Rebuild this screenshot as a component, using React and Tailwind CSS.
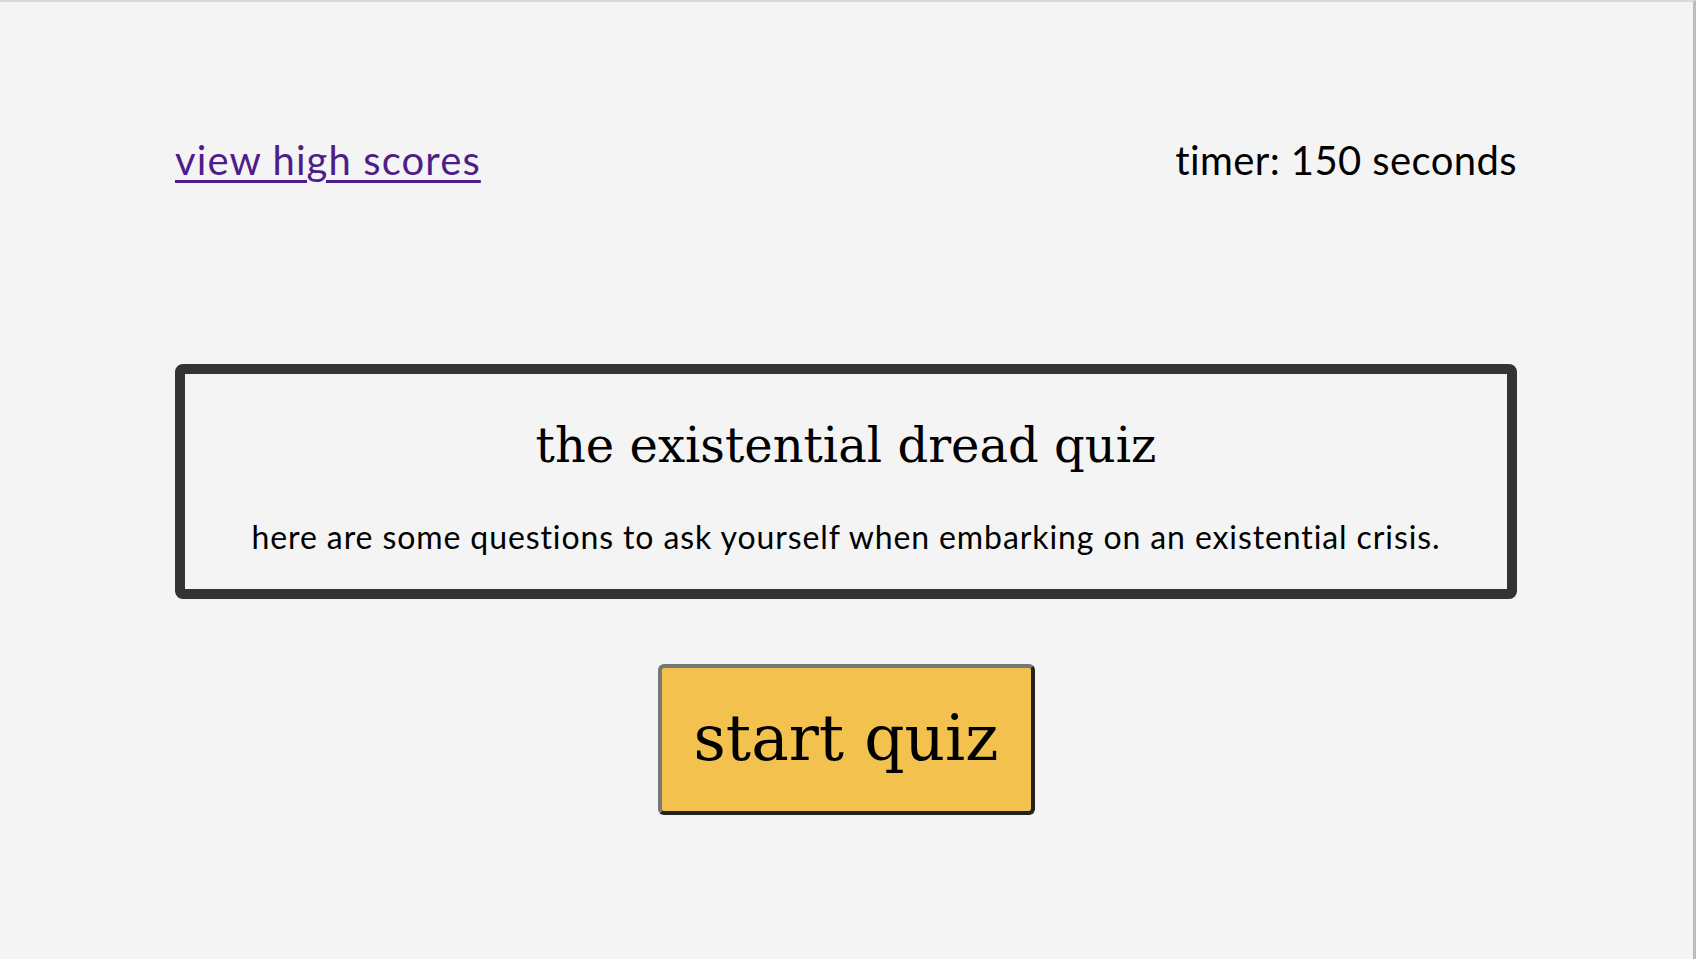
// Landing view for the existential dread quiz.
const sans = "font-['Lato','Open_Sans',sans-serif]";
const slab = "font-['DejaVu_Serif','Liberation_Serif',serif]";

export default function App() {
  return (
    <div className={`min-h-screen bg-[#f4f4f4] border-t-2 border-t-[#d9d9de] border-r-[3px] border-r-[#bdbdbd] text-black ${sans}`}>
      {/* Top bar: high scores link and timer */}
      <header className="flex items-center justify-between pl-[175px] pr-[176px] pt-[134px]">
        <a
          href="#"
          className="text-[40px] leading-[48px] tracking-[1.1px] text-[#4f1d8b] underline decoration-[3px] underline-offset-[5px]"
        >
          view high scores
        </a>
        <p className="text-[40px] leading-[48px] tracking-[0.4px]">timer: 150 seconds</p>
      </header>

      <main className="flex flex-col items-center pl-[175px] pr-[176px]">
        {/* Intro card */}
        <section className="mt-[180px] w-full rounded-lg border-[10px] border-[#333333] px-8 pt-[39px] pb-[32px] text-center">
          <h1 className={`text-[48px] leading-[64px] ${slab}`}>the existential dread quiz</h1>
          <p className="mt-[40px] text-[32px] leading-[40px] tracking-[0.9px]">
            here are some questions to ask yourself when embarking on an existential crisis.
          </p>
        </section>

        <button
          type="button"
          className={`mt-[65px] flex h-[151px] w-[377px] items-center justify-center rounded-md border-4 border-t-[#777777] border-l-[#777777] border-r-[#222222] border-b-[#222222] bg-[#f2c14e] text-[63px] ${slab}`}
        >
          start quiz
        </button>
      </main>
    </div>
  );
}
